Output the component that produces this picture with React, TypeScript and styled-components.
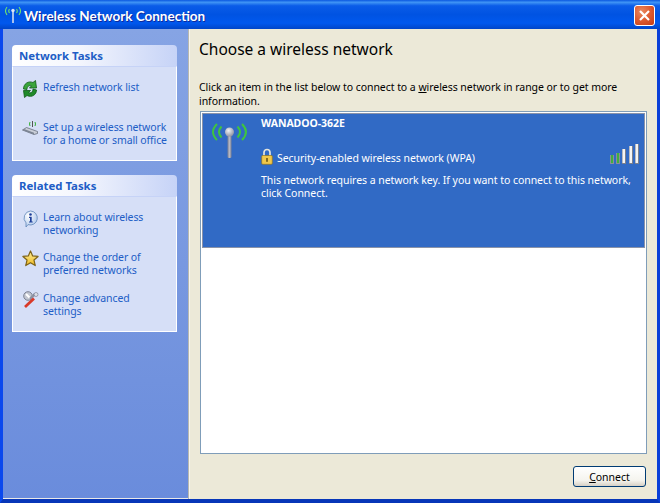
import styled, { createGlobalStyle } from "styled-components";

const GlobalStyle = createGlobalStyle`
  html, body {
    margin: 0;
    padding: 0;
    background: #0831d9;
    font-family: "Noto Sans", "Liberation Sans", sans-serif;
    font-size: 11px;
  }
`;

const Window = styled.div`
  width: 660px;
  height: 503px;
  display: flex;
  flex-direction: column;
  overflow: hidden;
`;

const TitleBar = styled.div`
  height: 29px;
  flex: none;
  display: flex;
  align-items: center;
  padding: 0 5px 0 4px;
  box-sizing: border-box;
  gap: 2px;
  background: linear-gradient(180deg, #0a58e0 0%, #3f94f5 8%, #0a5ce8 20%, #0053e2 50%, #0058ee 80%, #0045c8 100%);
`;

const TitleText = styled.span`
  flex: 1;
  color: #fff;
  font-family: Lato, "Open Sans", "Liberation Sans", sans-serif;
  font-weight: 700;
  font-size: 13.5px;
  text-shadow: 1px 1px 0 #0f2a9a;
  position: relative;
  top: 1px;
`;

const CloseButton = styled.div`
  width: 21px;
  height: 21px;
  box-sizing: border-box;
  border: 1px solid #fff;
  border-radius: 3px;
  background: radial-gradient(circle at 35% 30%, #ea8a60 0%, #dd5a30 50%, #c23a14 100%);
  display: flex;
  align-items: center;
  justify-content: center;
  position: relative;
  top: 1px;
`;

const Body = styled.div`
  flex: 1;
  display: flex;
  min-height: 0;
  border-left: 3px solid #0a48ee;
  border-right: 3px solid #0a3fd8;
  border-bottom: 4px solid #0736b8;
`;

const Sidebar = styled.div`
  width: 185px;
  flex: none;
  padding: 16px 11px 0 9px;
  box-sizing: border-box;
  background: linear-gradient(180deg, #86a4e4 0%, #6a8cdc 100%);
  display: flex;
  flex-direction: column;
  gap: 14px;
  border-bottom: 1px solid #e8e8e8;
`;

const Panel = styled.div`
  display: flex;
  flex-direction: column;
`;

const PanelHeader = styled.div`
  height: 21px;
  box-sizing: border-box;
  padding: 0 7px;
  display: flex;
  align-items: center;
  border-radius: 4px 4px 0 0;
  background: linear-gradient(90deg, #ffffff 0%, #f4f6fd 40%, #c6d3f7 100%);
  color: #215dc6;
  font-weight: 700;
  font-size: 11.4px;
`;

const PanelBody = styled.div<{ $height: number }>`
  height: ${(p) => p.$height}px;
  box-sizing: border-box;
  background: #d6dff7;
  border: 1px solid #fff;
  border-top: 1px solid #c6d3f7;
  padding: 0 0 0 8px;
  display: flex;
  flex-direction: column;
`;

const TaskRow = styled.div<{ $mt: number }>`
  display: flex;
  align-items: flex-start;
  margin-top: ${(p) => p.$mt}px;
`;

const TaskIcon = styled.div`
  width: 21px;
  height: 13px;
  padding-left: 1px;
  flex: none;
  display: flex;
  margin-top: -1px;
`;

const TaskLink = styled.div`
  color: #215dc6;
  font-size: 10.5px;
  line-height: 13px;
  letter-spacing: -0.1px;
`;

const Divider = styled.div`
  width: 2px;
  flex: none;
  background: #f5f5f0;
  border-left: 1px solid #b8b8b0;
  box-sizing: border-box;
`;

const Main = styled.div`
  flex: 1;
  background: #ece9d8;
  padding: 10px 10px 0 9px;
  display: flex;
  flex-direction: column;
  min-width: 0;
`;

const Heading = styled.div`
  font-size: 15.5px;
  line-height: 20px;
  color: #000;
`;

const Hint = styled.div`
  margin-top: 21px;
  font-size: 10.5px;
  line-height: 14px;
  color: #000;
  letter-spacing: -0.05px;
  & u { text-decoration: underline; }
`;

const NetworkList = styled.div`
  margin-top: 3px;
  margin-left: 1px;
  height: 343px;
  box-sizing: border-box;
  border: 1px solid #7f9db9;
  background: #fff;
  padding: 1px;
`;

const NetworkItem = styled.div`
  height: 135px;
  box-sizing: border-box;
  background: #316ac5;
  border: 1px solid #8a93a8;
  display: flex;
  color: #fff;
`;

const NetworkIcon = styled.div`
  width: 58px;
  flex: none;
  padding: 9px 0 0 9px;
  box-sizing: border-box;
`;

const NetworkInfo = styled.div`
  flex: 1;
  padding: 3px 5px 0 0;
  font-size: 10.5px;
  line-height: 13px;
  letter-spacing: -0.05px;
`;

const NetworkName = styled.div`
  font-weight: 700;
  height: 14px;
  font-size: 10.5px;
`;

const SecurityRow = styled.div`
  margin-top: 13px;
  display: flex;
  align-items: flex-end;
  height: 21px;
`;

const SecurityText = styled.span`
  flex: 1;
  margin-left: 4px;
`;

const SignalSlot = styled.div`
  align-self: flex-start;
  height: 20px;
`;

const Message = styled.div`
  margin-top: 9px;
`;

const Footer = styled.div`
  display: flex;
  justify-content: flex-end;
  margin-top: 12px;
  margin-right: 1px;
`;

const ConnectButton = styled.div`
  width: 73px;
  height: 21px;
  box-sizing: border-box;
  border: 1px solid #003c74;
  border-radius: 3px;
  background: linear-gradient(180deg, #fff 0%, #f5f4ee 70%, #d6d0c5 100%);
  display: flex;
  align-items: center;
  justify-content: center;
  font-size: 10.5px;
  color: #000;
`;

const Refresh = () => (
  <svg width="16" height="18" viewBox="0 0 16 18">
    <path d="M1.5 9 C1.5 4 6 0.5 11 2.5 L13.5 0.5 L14.5 8 L7.5 8 L9.5 5.8 C7 5 5 6.5 5 9.5 Z" fill="#3aa53a" stroke="#0c5a14" strokeWidth="0.8" />
    <path d="M14.5 10 C14.5 14.5 10 18 5 15.5 L2.5 17.5 L1.5 10.5 L8.5 10.5 L6.5 12.5 C9 13.5 11 12 11 9 Z" fill="#1f8a2a" stroke="#0c5a14" strokeWidth="0.8" />
  </svg>
);

const Router = () => (
  <svg width="16" height="17" viewBox="0 0 16 17">
    <path d="M0.5 10 L12 14.5 L15.5 13.5 L15.5 11.5 L4.5 7.5 Z" fill="#c9ced8" stroke="#5a6270" strokeWidth="0.7" />
    <path d="M0.5 10 L12 14.5 L12 12.8 L2 9 Z" fill="#7b8494" />
    <path d="M10.5 1 V7" stroke="#555" strokeWidth="1" />
    <path d="M8 2 Q7 4 8 6 M13 2 Q14 4 13 6" stroke="#35b035" strokeWidth="1" fill="none" />
  </svg>
);

const Info = () => (
  <svg width="17" height="18" viewBox="0 0 17 18">
    <defs>
      <radialGradient id="infoBubble" cx="35%" cy="30%" r="80%">
        <stop offset="0%" stopColor="#ffffff" />
        <stop offset="100%" stopColor="#a9c4ea" />
      </radialGradient>
    </defs>
    <path d="M8.5 1 A7 7 0 1 1 6 14.6 L4 17 L4 12.8 A7 7 0 0 1 8.5 1 Z" fill="url(#infoBubble)" stroke="#5f86b8" strokeWidth="0.8" />
    <circle cx="8.5" cy="4.5" r="1.3" fill="#1d3f9a" />
    <path d="M7 6.8 H9.7 V11.5 H10.7 V12.6 H7 V11.5 H8 V8 H7 Z" fill="#1d3f9a" />
  </svg>
);

const Star = () => (
  <svg width="17" height="17" viewBox="0 0 18 18">
    <defs>
      <linearGradient id="starFill" x1="0" y1="0" x2="0" y2="1">
        <stop offset="0%" stopColor="#fff2a0" />
        <stop offset="100%" stopColor="#eeb820" />
      </linearGradient>
    </defs>
    <path d="M9 1 L11.3 6.3 L17 6.8 L12.7 10.6 L14 16.5 L9 13.4 L4 16.5 L5.3 10.6 L1 6.8 L6.7 6.3 Z" fill="url(#starFill)" stroke="#7f6418" strokeWidth="1.3" strokeLinejoin="round" />
  </svg>
);

const Wrench = () => (
  <svg width="17" height="18" viewBox="0 0 17 18">
    <circle cx="6" cy="5" r="4.3" fill="#c3c7d2" stroke="#666c7c" strokeWidth="0.8" />
    <path d="M4 3 L8 7" stroke="#fff" strokeWidth="2" />
    <path d="M8 8 L13 3" stroke="#8d93a3" strokeWidth="2.5" />
    <circle cx="14" cy="3.5" r="2" fill="#dde0e8" stroke="#70768a" strokeWidth="0.6" />
    <path d="M3 16 L12 7.5" stroke="#d93a2a" strokeWidth="2.8" />
  </svg>
);

const Antenna = () => (
  <svg width="38" height="36" viewBox="0 0 38 36">
    <defs>
      <radialGradient id="ball" cx="40%" cy="35%" r="70%">
        <stop offset="0%" stopColor="#f0f1f5" />
        <stop offset="100%" stopColor="#8b8f9f" />
      </radialGradient>
      <linearGradient id="mast" x1="0" y1="0" x2="1" y2="0">
        <stop offset="0%" stopColor="#7d8194" />
        <stop offset="50%" stopColor="#b4b7c4" />
        <stop offset="100%" stopColor="#7d8194" />
      </linearGradient>
    </defs>
    <path d="M5 1 Q-3 9 5 17 M9.5 3.5 Q4.5 9 9.5 14.5 M25.5 3.5 Q30.5 9 25.5 14.5 M30 1 Q38 9 30 17" fill="none" stroke="#3fc43f" strokeWidth="2" />
    <rect x="15.5" y="11" width="4" height="24" rx="1.5" fill="url(#mast)" />
    <circle cx="17.5" cy="9" r="4.5" fill="url(#ball)" />
  </svg>
);

const TinyAntenna = () => (
  <svg width="18" height="18" viewBox="0 0 18 18">
    <path d="M3 1 Q0 5 3 9 M5.5 3 Q4 5 5.5 7 M12.5 3 Q14 5 12.5 7 M15 1 Q18 5 15 9" fill="none" stroke="#6fe56f" strokeWidth="1.1" />
    <rect x="8" y="5" width="2" height="12" fill="#a8c0ee" />
    <circle cx="9" cy="4.5" r="1.7" fill="#dfe6f5" />
  </svg>
);

const Lock = () => (
  <svg width="12" height="17" viewBox="0 0 12 17">
    <path d="M3 8 V4.5 A3 3 0 0 1 9 4.5 V8" fill="none" stroke="#e4e4dc" strokeWidth="1.7" />
    <rect x="0.7" y="7.5" width="10.6" height="8.8" rx="1" fill="#f1c84a" stroke="#8f7420" strokeWidth="0.7" />
    <rect x="5.2" y="10" width="1.6" height="3.8" fill="#6a5414" />
  </svg>
);

const Signal = () => (
  <svg width="29" height="20" viewBox="0 0 29 20" style={{ display: "block" }}>
    <rect x="0" y="11" width="4" height="9" fill="#8a8f9c" />
    <rect x="1" y="11" width="2" height="8" fill="#3fb03f" />
    <rect x="6" y="9" width="4" height="11" fill="#8a8f9c" />
    <rect x="7" y="9" width="2" height="10" fill="#3fb03f" />
    <rect x="12" y="5" width="4" height="15" fill="#7d818c" />
    <rect x="12.5" y="5" width="2.5" height="14" fill="#f4f4f4" />
    <rect x="19" y="2" width="4" height="18" fill="#7d818c" />
    <rect x="19.5" y="2" width="2.5" height="17" fill="#f4f4f4" />
    <rect x="25" y="0" width="4" height="20" fill="#7d818c" />
    <rect x="25.5" y="0" width="2.5" height="19" fill="#f4f4f4" />
  </svg>
);

export default function App() {
  return (
    <Window>
      <GlobalStyle />
      <TitleBar>
        <TinyAntenna />
        <TitleText>Wireless Network Connection</TitleText>
        <CloseButton>
          <svg width="13" height="13" viewBox="0 0 13 13">
            <path d="M2 2 L11 11 M11 2 L2 11" stroke="#fff" strokeWidth="2.2" />
          </svg>
        </CloseButton>
      </TitleBar>
      <Body>
        <Sidebar>
          <Panel>
            <PanelHeader>Network Tasks</PanelHeader>
            <PanelBody $height={95}>
              <TaskRow $mt={14}>
                <TaskIcon><Refresh /></TaskIcon>
                <TaskLink>Refresh network list</TaskLink>
              </TaskRow>
              <TaskRow $mt={27}>
                <TaskIcon><Router /></TaskIcon>
                <TaskLink>Set up a wireless network<br />for a home or small office</TaskLink>
              </TaskRow>
            </PanelBody>
          </Panel>
          <Panel>
            <PanelHeader>Related Tasks</PanelHeader>
            <PanelBody $height={136}>
              <TaskRow $mt={14}>
                <TaskIcon><Info /></TaskIcon>
                <TaskLink>Learn about wireless<br />networking</TaskLink>
              </TaskRow>
              <TaskRow $mt={14}>
                <TaskIcon><Star /></TaskIcon>
                <TaskLink>Change the order of<br />preferred networks</TaskLink>
              </TaskRow>
              <TaskRow $mt={15}>
                <TaskIcon><Wrench /></TaskIcon>
                <TaskLink>Change advanced<br />settings</TaskLink>
              </TaskRow>
            </PanelBody>
          </Panel>
        </Sidebar>
        <Divider />
        <Main>
          <Heading>Choose a wireless network</Heading>
          <Hint>
            Click an item in the list below to connect to a <u>w</u>ireless network in range or to get more information.
          </Hint>
          <NetworkList>
            <NetworkItem>
              <NetworkIcon><Antenna /></NetworkIcon>
              <NetworkInfo>
                <NetworkName>WANADOO-362E</NetworkName>
                <SecurityRow>
                  <Lock />
                  <SecurityText>Security-enabled wireless network (WPA)</SecurityText>
                  <SignalSlot><Signal /></SignalSlot>
                </SecurityRow>
                <Message>This network requires a network key. If you want to connect to this network, click Connect.</Message>
              </NetworkInfo>
            </NetworkItem>
          </NetworkList>
          <Footer>
            <ConnectButton><span><u>C</u>onnect</span></ConnectButton>
          </Footer>
        </Main>
      </Body>
    </Window>
  );
}
